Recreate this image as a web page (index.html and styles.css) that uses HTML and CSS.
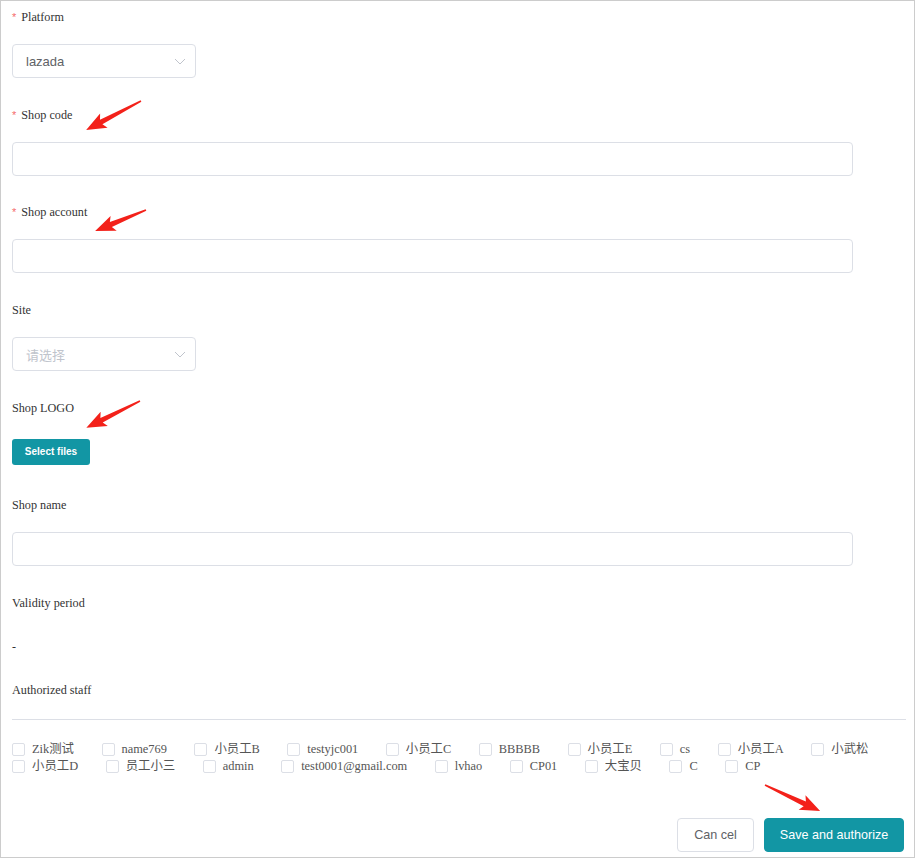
FILE: index.html
```html
<!DOCTYPE html>
<html>
<head>
<meta charset="utf-8">
<link rel="stylesheet" href="styles.css">
</head>
<body>
<div class="page">
  <div class="item">
    <div class="label"><span class="req">*</span>Platform</div>
    <div class="select"><span class="val">lazada</span><svg class="chev" width="12" height="7" viewBox="0 0 12 7"><polyline points="1,1 6,6 11,1" fill="none" stroke="#c0c4cc" stroke-width="1"/></svg></div>
  </div>
  <div class="item">
    <div class="label"><span class="req">*</span>Shop code</div>
    <div class="input"></div>
  </div>
  <div class="item">
    <div class="label"><span class="req">*</span>Shop account</div>
    <div class="input"></div>
  </div>
  <div class="item">
    <div class="label">Site</div>
    <div class="select"><span class="ph">请选择</span><svg class="chev" width="12" height="7" viewBox="0 0 12 7"><polyline points="1,1 6,6 11,1" fill="none" stroke="#c0c4cc" stroke-width="1"/></svg></div>
  </div>
  <div class="item">
    <div class="label">Shop LOGO</div>
    <div class="upload"><span class="btn-upload">Select files</span></div>
  </div>
  <div class="item">
    <div class="label">Shop name</div>
    <div class="input"></div>
  </div>
  <div class="item item-plain">
    <div class="label">Validity period</div>
    <div class="text-row">-</div>
  </div>
  <div class="label">Authorized staff</div>
  <div class="divider"></div>
  <div class="checks">
    <label class="chk"><span class="box"></span>Zik测试</label>
    <label class="chk"><span class="box"></span>name769</label>
    <label class="chk"><span class="box"></span>小员工B</label>
    <label class="chk"><span class="box"></span>testyjc001</label>
    <label class="chk"><span class="box"></span>小员工C</label>
    <label class="chk"><span class="box"></span>BBBBB</label>
    <label class="chk"><span class="box"></span>小员工E</label>
    <label class="chk"><span class="box"></span>cs</label>
    <label class="chk"><span class="box"></span>小员工A</label>
    <label class="chk"><span class="box"></span>小武松</label>
    <label class="chk"><span class="box"></span>小员工D</label>
    <label class="chk"><span class="box"></span>员工小三</label>
    <label class="chk"><span class="box"></span>admin</label>
    <label class="chk"><span class="box"></span>test0001@gmail.com</label>
    <label class="chk"><span class="box"></span>lvhao</label>
    <label class="chk"><span class="box"></span>CP01</label>
    <label class="chk"><span class="box"></span>大宝贝</label>
    <label class="chk"><span class="box"></span>C</label>
    <label class="chk"><span class="box"></span>CP</label>
  </div>
  <div class="actions">
    <span class="btn btn-default">Can cel</span>
    <span class="btn btn-primary">Save and authorize</span>
  </div>
  <svg class="arrows" width="915" height="858" viewBox="0 0 915 858">
    <g fill="#f3211a">
      <polygon transform="translate(141 101) rotate(152.2)" points="0,-0.8 45,-2.6 42,-8 62,0 42,8 45,2.6 0,0.8"/>
      <polygon transform="translate(146 210) rotate(157.6)" points="0,-0.8 38,-2.6 35,-8 55,0 35,8 38,2.6 0,0.8"/>
      <polygon transform="translate(140 401) rotate(153.4)" points="0,-0.8 43,-2.6 40,-8 60,0 40,8 43,2.6 0,0.8"/>
      <polygon transform="translate(765 785) rotate(25.3)" points="0,-0.8 44,-2.6 41,-8 61,0 41,8 44,2.6 0,0.8"/>
    </g>
  </svg>
</div>
</body>
</html>
```
FILE: styles.css
```css
html, body {
  margin: 0;
  padding: 0;
  background: #fff;
}
.page {
  position: relative;
  width: 915px;
  height: 858px;
  box-sizing: border-box;
  border: 1px solid #cccccc;
  padding: 6px 10px 0 11px;
  font-family: "Liberation Serif", "Noto Sans CJK SC", serif;
  font-size: 12px;
  color: #333;
  overflow: hidden;
}
.item {
  display: flex;
  flex-direction: column;
  margin-bottom: 26.7px;
}
.label {
  height: 20px;
  line-height: 20px;
  font-size: 12.2px;
  color: #333;
}
.req {
  color: #f56c6c;
  margin-right: 5px;
  font-family: "Liberation Sans", sans-serif;
  font-size: 11px;
}
.select, .input {
  margin-top: 17px;
  height: 34px;
  box-sizing: border-box;
  border: 1px solid #dcdfe6;
  border-radius: 4px;
  background: #fff;
}
.input {
  width: 841px;
}
.select {
  width: 184px;
  display: flex;
  align-items: center;
  justify-content: space-between;
  padding: 0 9px 0 13px;
  font-family: "Liberation Sans", "Noto Sans CJK SC", sans-serif;
  font-size: 13px;
}
.val {
  color: #606266;
}
.ph {
  color: #c0c4cc;
  font-family: "Noto Sans CJK SC", sans-serif;
  font-size: 13px;
}
.upload {
  margin-top: 17px;
  height: 34px;
  display: flex;
  align-items: center;
}
.btn-upload {
  width: 78px;
  height: 26px;
  line-height: 26px;
  text-align: center;
  background: #1296a4;
  color: #fff;
  border-radius: 3px;
  font-family: "Liberation Sans", sans-serif;
  font-size: 10px;
  font-weight: bold;
}
.item-plain {
  margin-bottom: 16px;
}
.text-row {
  margin-top: 17px;
  height: 34px;
  line-height: 34px;
}
.divider {
  margin-top: 19px;
  height: 1px;
  background: #dcdfe6;
  width: 894px;
}
.checks {
  margin-top: 21px;
  display: flex;
  flex-wrap: wrap;
  column-gap: 27.5px;
  width: 894px;
}
.chk {
  display: flex;
  align-items: center;
  height: 17px;
  line-height: 17px;
  color: #555;
  font-size: 12.4px;
}
.box {
  width: 13px;
  height: 13px;
  box-sizing: border-box;
  border: 1px solid #dcdfe6;
  border-radius: 2px;
  margin-right: 7px;
  background: #fff;
}
.actions {
  margin-top: 43px;
  display: flex;
  justify-content: flex-end;
  gap: 10px;
}
.btn {
  height: 34px;
  line-height: 32px;
  box-sizing: border-box;
  border-radius: 4px;
  text-align: center;
  font-family: "Liberation Sans", sans-serif;
  font-size: 12.6px;
}
.btn-default {
  width: 77px;
  border: 1px solid #dcdfe6;
  color: #606266;
  background: #fff;
}
.btn-primary {
  width: 140px;
  border: 1px solid #1296a4;
  background: #1296a4;
  color: #fff;
}
.arrows {
  position: absolute;
  left: -1px;
  top: -1px;
  pointer-events: none;
}
```
